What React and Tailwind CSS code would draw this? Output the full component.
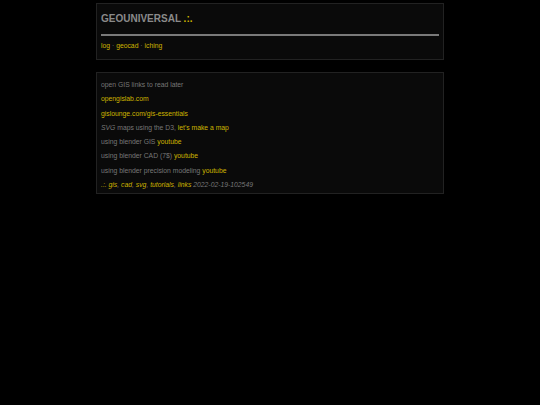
import React from 'react';

const Y = 'text-[#cdb400]';

function Row({ children }) {
  return <p className="leading-[14.3px]">{children}</p>;
}

export default function App() {
  return (
    <div className="min-h-[405px] bg-black pt-[3px]" style={{ fontFamily: '"Liberation Sans", Arial, sans-serif' }}>
      <div className="mx-auto w-[348px]">
        <div className="border border-[#222] bg-[#0a0a0a] px-[4px] pt-[5px] pb-[7px]">
          <h1 className="text-[10px] font-bold leading-[20px] text-[#8a8a8a]">
            GEOUNIVERSAL <span className={Y}>.:.</span>
          </h1>
          <div className="mt-[5px] h-[2px] bg-[#7a7a7a]" />
          <p className="mt-[4px] text-[6.8px] leading-[12px] text-[#777]">
            <span className={Y}>log</span> · <span className={Y}>geocad</span> · <span className={Y}>iching</span>
          </p>
        </div>

        <div className="mt-[12px] border border-[#222] bg-[#0a0a0a] px-[4px] pt-[5px] pb-[1px] text-[6.8px] text-[#777]">
          <Row>open GIS links to read later</Row>
          <Row><span className={Y}>opengislab.com</span></Row>
          <Row><span className={Y}>gislounge.com/gis-essentials</span></Row>
          <Row><i>SVG</i> maps using the D3, <span className={Y}>let's make a map</span></Row>
          <Row>using blender GIS <span className={Y}>youtube</span></Row>
          <Row>using blender CAD (7$) <span className={Y}>youtube</span></Row>
          <Row>using blender precision modeling <span className={Y}>youtube</span></Row>
          <Row>
            <i>
              <span className={Y}>.:.</span> <span className={Y}>gis</span>, <span className={Y}>cad</span>,{' '}
              <span className={Y}>svg</span>, <span className={Y}>tutorials</span>, <span className={Y}>links</span>{' '}
              2022-02-19-102549
            </i>
          </Row>
        </div>
      </div>
    </div>
  );
}
